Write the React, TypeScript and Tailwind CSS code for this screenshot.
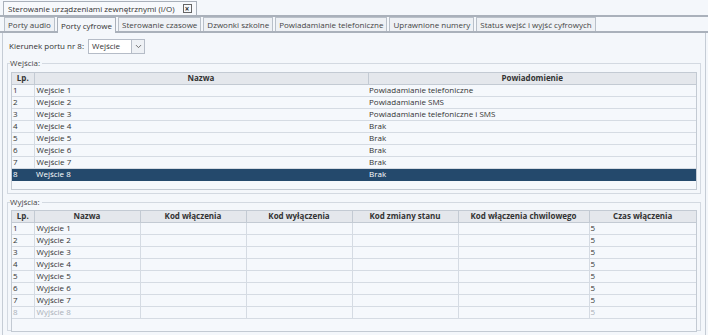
import { ChevronDown } from 'lucide-react';

const inputs = [
  { lp: 1, name: 'Wejście 1', notify: 'Powiadamianie telefoniczne' },
  { lp: 2, name: 'Wejście 2', notify: 'Powiadamianie SMS' },
  { lp: 3, name: 'Wejście 3', notify: 'Powiadamianie telefoniczne i SMS' },
  { lp: 4, name: 'Wejście 4', notify: 'Brak' },
  { lp: 5, name: 'Wejście 5', notify: 'Brak' },
  { lp: 6, name: 'Wejście 6', notify: 'Brak' },
  { lp: 7, name: 'Wejście 7', notify: 'Brak' },
  { lp: 8, name: 'Wejście 8', notify: 'Brak' },
];

const outputs = [1, 2, 3, 4, 5, 6, 7, 8].map((n) => ({ lp: n, name: `Wyjście ${n}`, time: '5' }));

const tabs = [
  'Porty audio',
  'Porty cyfrowe',
  'Sterowanie czasowe',
  'Dzwonki szkolne',
  'Powiadamianie telefoniczne',
  'Uprawnione numery',
  'Status wejść i wyjść cyfrowych',
];

export default function App() {
  return (
    <div className="w-[708px] h-[335px] overflow-hidden bg-[#f4f7fb] text-[#333] text-[8px] leading-none font-['Open_Sans',sans-serif]">
      {/* Title tab */}
      <div className="h-[15px] pl-[3px] flex items-end">
        <div className="h-[14px] flex items-center gap-[8px] px-[4px] border border-b-0 border-[#a9b0ba] bg-[#f7f9fc]">
          <span>Sterowanie urządzeniami zewnętrznymi (I/O)</span>
          <span className="w-[9px] h-[9px] border border-[#666] flex items-center justify-center text-[8px] leading-none font-bold">×</span>
        </div>
      </div>

      <div className="border-t-2 border-[#aab1bb] h-[320px] flex flex-col">
        {/* Tab strip */}
        <div className="h-[16px] pl-[4px] flex items-end gap-[2px] border-b-2 border-[#aab1bb]">
          {tabs.map((t) =>
            t === 'Porty cyfrowe' ? (
              <div key={t} className="h-[16px] -mb-[2px] px-[3px] flex items-center bg-[#f4f7fb] border border-b-0 border-[#a9b0ba]">
                {t}
              </div>
            ) : (
              <div key={t} className="h-[14px] px-[3px] flex items-center bg-[#eef1f5] border border-b-0 border-[#b9c0c9] text-[#444]">
                {t}
              </div>
            )
          )}
        </div>

        <div className="flex-1 mx-[2px] border-x border-[#c5ccd5] px-[4px] pt-[5px]">
          {/* Direction select */}
          <div className="flex items-center gap-[4px] pl-[2px] h-[16px]">
            <span>Kierunek portu nr 8:</span>
            <div className="w-[57px] h-[15px] flex border border-[#b5bcc7] bg-white">
              <span className="flex-1 pl-[3px] flex items-center">Wejście</span>
              <span className="w-[13px] border-l border-[#b5bcc7] bg-[#eef1f5] flex items-center justify-center">
                <ChevronDown className="w-[9px] h-[9px] text-[#666]" strokeWidth={2.5} />
              </span>
            </div>
          </div>

          {/* Inputs */}
          <fieldset className="mt-[5px] border border-[#d3d9e1] px-[3px] h-[135px]">
            <legend className="-ml-[1px] pr-[2px] text-[#444]">Wejścia:</legend>
            <div className="mt-[5px] h-[118px] border border-[#c3cad3] bg-[#f5f8fc]">
              <table className="w-full table-fixed border-collapse">
                <colgroup>
                  <col className="w-[22px]" />
                  <col className="w-[334px]" />
                  <col />
                </colgroup>
                <thead>
                  <tr className="h-[11px] bg-[#e4e7ec]">
                    <th className="border-r border-b border-[#c3cad3] font-bold text-center">Lp.</th>
                    <th className="border-r border-b border-[#c3cad3] font-bold text-center">Nazwa</th>
                    <th className="border-b border-[#c3cad3] font-bold text-center">Powiadomienie</th>
                  </tr>
                </thead>
                <tbody>
                  {inputs.map((r) => {
                    const sel = r.lp === 8;
                    return (
                      <tr key={r.lp} className={sel ? 'h-[12px] bg-[#24496c] text-white' : 'h-[12px]'}>
                        <td className={sel ? 'pl-[1px] border-b border-[#24496c]' : 'pl-[1px] border-r border-b border-[#d5dbe3]'}>{r.lp}</td>
                        <td className={sel ? 'pl-[2px] border-b border-[#24496c]' : 'pl-[2px] border-b border-[#d5dbe3]'}>{r.name}</td>
                        <td className={sel ? 'pl-[1px] border-b border-[#24496c]' : 'pl-[1px] border-b border-[#d5dbe3]'}>{r.notify}</td>
                      </tr>
                    );
                  })}
                </tbody>
              </table>
            </div>
          </fieldset>

          {/* Outputs */}
          <fieldset className="mt-[4px] border border-[#d3d9e1] px-[3px] h-[133px]">
            <legend className="-ml-[1px] pr-[2px] text-[#444]">Wyjścia:</legend>
            <div className="mt-[4px] h-[122px] border border-[#c3cad3] bg-[#f5f8fc]">
              <table className="w-full table-fixed border-collapse">
                <colgroup>
                  <col className="w-[22px]" />
                  <col className="w-[106px]" />
                  <col className="w-[106px]" />
                  <col className="w-[106px]" />
                  <col className="w-[106px]" />
                  <col className="w-[131px]" />
                  <col />
                </colgroup>
                <thead>
                  <tr className="h-[11px] bg-[#e4e7ec]">
                    {['Lp.', 'Nazwa', 'Kod włączenia', 'Kod wyłączenia', 'Kod zmiany stanu', 'Kod włączenia chwilowego', 'Czas włączenia'].map((h, i) => (
                      <th key={h} className={i < 6 ? 'border-r border-b border-[#c3cad3] font-bold text-center' : 'border-b border-[#c3cad3] font-bold text-center'}>
                        {h}
                      </th>
                    ))}
                  </tr>
                </thead>
                <tbody>
                  {outputs.map((r) => {
                    const dim = r.lp === 8 ? 'text-[#aab0b8]' : '';
                    return (
                      <tr key={r.lp} className={`h-[12px] ${dim}`}>
                        <td className="pl-[1px] border-r border-b border-[#d5dbe3]">{r.lp}</td>
                        <td className="pl-[2px] border-r border-b border-[#d5dbe3]">{r.name}</td>
                        <td className="border-r border-b border-[#d5dbe3]"></td>
                        <td className="border-r border-b border-[#d5dbe3]"></td>
                        <td className="border-r border-b border-[#d5dbe3]"></td>
                        <td className="border-r border-b border-[#d5dbe3]"></td>
                        <td className="pl-[1px] border-b border-[#d5dbe3]">{r.time}</td>
                      </tr>
                    );
                  })}
                </tbody>
              </table>
            </div>
          </fieldset>
        </div>
      </div>
    </div>
  );
}
